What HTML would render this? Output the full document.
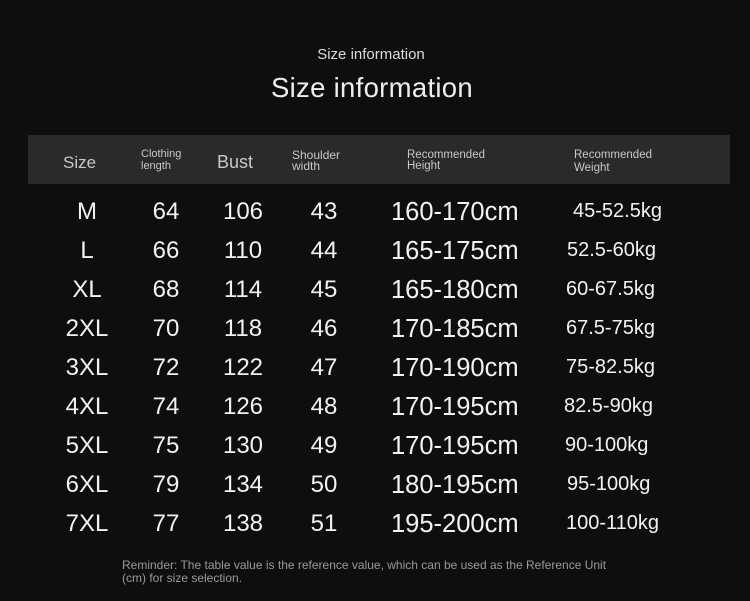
<!DOCTYPE html>
<html><head><meta charset="utf-8"><style>
body{margin:0;width:750px;height:601px;background:#0e0e0e;overflow:hidden;font-family:"Liberation Sans",sans-serif;color:#eee;position:relative}
.a{position:absolute;white-space:nowrap}
.c{transform:translateX(-50%)}
.n{font-size:24px;color:#f2f2f2;line-height:1}
.h{font-size:25.5px}
.w{font-size:20px}
.hd{color:#c8c8c8}
</style></head><body>
<div class="a c" style="left:371px;top:46px;font-size:15px;color:#ddd">Size information</div>
<div class="a c" style="left:372px;top:72px;font-size:27.5px;color:#eee;letter-spacing:0.3px">Size information</div>
<div class="a" style="left:28px;top:135px;width:702px;height:49px;background:#2a2a2a"></div>
<div class="a hd" style="left:63px;top:153px;font-size:17px">Size</div>
<div class="a hd" style="left:141px;top:148px;font-size:11px;line-height:12px">Clothing<br>length</div>
<div class="a hd" style="left:217px;top:152px;font-size:18px">Bust</div>
<div class="a hd" style="left:292px;top:150px;font-size:12px;line-height:11px">Shoulder<br>width</div>
<div class="a hd" style="left:407px;top:150px;font-size:11.5px;line-height:11px">Recommended<br>Height</div>
<div class="a hd" style="left:574px;top:149px;font-size:11.5px;line-height:13px">Recommended<br>Weight</div>

<div id="rows"></div>
<script>
var d=[["M",64,106,43,"160-170cm","45-52.5kg",573],["L",66,110,44,"165-175cm","52.5-60kg",567],["XL",68,114,45,"165-180cm","60-67.5kg",566],["2XL",70,118,46,"170-185cm","67.5-75kg",566],["3XL",72,122,47,"170-190cm","75-82.5kg",566],["4XL",74,126,48,"170-195cm","82.5-90kg",564],["5XL",75,130,49,"170-195cm","90-100kg",565],["6XL",79,134,50,"180-195cm","95-100kg",567],["7XL",77,138,51,"195-200cm","100-110kg",566]];
var h="";d.forEach(function(r,i){var y=200+i*39;
h+='<div class="a c n" style="left:87px;top:'+y+'px">'+r[0]+'</div>';
h+='<div class="a c n" style="left:166px;top:'+y+'px">'+r[1]+'</div>';
h+='<div class="a c n" style="left:243px;top:'+y+'px">'+r[2]+'</div>';
h+='<div class="a c n" style="left:324px;top:'+y+'px">'+r[3]+'</div>';
h+='<div class="a n h" style="left:391px;top:'+(y)+'px">'+r[4]+'</div>';
h+='<div class="a n w" style="left:'+r[6]+'px;top:'+(y+1)+'px">'+r[5]+'</div>';});
document.getElementById("rows").innerHTML=h;
</script>
<div class="a" style="left:122px;top:559px;font-size:12px;line-height:13px;color:#9a9a9a">Reminder: The table value is the reference value, which can be used as the Reference Unit<br>(cm) for size selection.</div>
</body></html>
